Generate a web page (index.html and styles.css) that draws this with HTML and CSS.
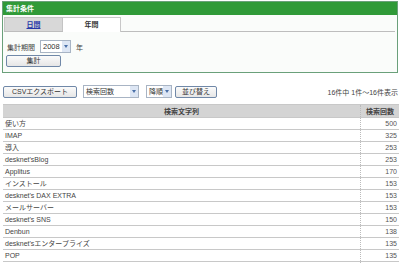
FILE: index.html
```html
<!DOCTYPE html>
<html lang="ja">
<head>
    <meta charset="UTF-8">
    <title>検索キーワード集計</title>
    <link rel="stylesheet" href="styles.css">
</head>
<body>
    <div class="panel">
        <div class="panel-head">集計条件</div>
        <div class="tabs">
            <div class="tab off"><a href="#">日間</a></div>
            <div class="tab on">年間</div>
        </div>
        <div class="period">
            <span class="label">集計期間</span>
            <span class="select year"><span class="val">2008</span><span class="arrow"></span></span>
            <span class="unit">年</span>
        </div>
        <button class="btn sum">集計</button>
    </div>

    <div class="toolbar">
        <button class="btn csv">CSVエクスポート</button>
        <span class="select sort-key"><span class="val">検索回数</span><span class="arrow"></span></span>
        <span class="select sort-dir"><span class="val">降順</span><span class="arrow"></span></span>
        <button class="btn sort">並び替え</button>
        <span class="count">16件中 1件～16件表示</span>
    </div>

    <table class="result">
        <thead>
            <tr><th>検索文字列</th><th class="num-col">検索回数</th></tr>
        </thead>
        <tbody>
            <tr><td>使い方</td><td class="num">500</td></tr>
            <tr><td>IMAP</td><td class="num">325</td></tr>
            <tr><td>導入</td><td class="num">253</td></tr>
            <tr><td>desknet'sBlog</td><td class="num">253</td></tr>
            <tr><td>Applitus</td><td class="num">170</td></tr>
            <tr><td>インストール</td><td class="num">153</td></tr>
            <tr><td>desknet's DAX EXTRA</td><td class="num">153</td></tr>
            <tr><td>メールサーバー</td><td class="num">153</td></tr>
            <tr><td>desknet's SNS</td><td class="num">150</td></tr>
            <tr><td>Denbun</td><td class="num">138</td></tr>
            <tr><td>desknet'sエンタープライズ</td><td class="num">135</td></tr>
            <tr><td>POP</td><td class="num">135</td></tr>
            <tr><td>&nbsp;</td><td class="num">&nbsp;</td></tr>
        </tbody>
    </table>
</body>
</html>
```

FILE: styles.css
```css
body {
    margin: 0;
    background-color: #fff;
    font-family: "Liberation Sans", "Noto Sans CJK JP", sans-serif;
    font-size: 7px;
    color: #444;
    overflow: hidden;
}
.panel {
    margin: 1px 2px 0 2px;
    height: 70px;
    border: 1px solid #6aa07a;
    background-color: #fafcfa;
}
.panel-head {
    height: 13px;
    line-height: 13px;
    padding-left: 3px;
    background-color: #309a38;
    color: #fff;
    font-weight: bold;
}
.tabs {
    display: flex;
    margin: 2px 2px 0 1px;
    height: 14px;
    border-bottom: 1px solid #bdbdbd;
}
.tab {
    width: 57px;
    height: 13px;
    line-height: 13px;
    text-align: center;
    font-weight: bold;
}
.tab.off {
    background-color: #d8d8d8;
    border: 1px solid #c4c4c4;
    border-bottom: none;
}
.tab.off a {
    color: #2838a8;
}
.tab.on {
    height: 14px;
    background-color: #fff;
    border: 1px solid #c8c8c8;
    border-bottom: none;
    border-left: none;
    color: #333;
}
.period {
    display: flex;
    align-items: center;
    margin: 8px 0 0 4px;
    height: 13px;
}
.label {
    margin-right: 5px;
}
.unit {
    margin-left: 5px;
}
.select {
    display: inline-flex;
    align-items: stretch;
    height: 11px;
    border: 1px solid #a8b4c4;
    background-color: #fff;
    white-space: nowrap;
}
.select .val {
    flex: 1;
    padding-left: 2px;
    line-height: 11px;
    color: #333;
    overflow: hidden;
}
.select .arrow {
    flex: none;
    width: 8px;
    background-color: #dde6f4;
    position: relative;
}
.select .arrow::after {
    content: "";
    position: absolute;
    left: 2px;
    top: 4px;
    width: 0;
    height: 0;
    border-left: 2px solid transparent;
    border-right: 2px solid transparent;
    border-top: 3px solid #4a6fa8;
}
.select.year {
    width: 29px;
}
.select.year .val {
    font-size: 7.5px;
}
.btn {
    font-family: inherit;
    font-size: 7px;
    height: 12px;
    padding: 0;
    border: 1px solid #7088a8;
    border-radius: 2px;
    background: linear-gradient(#fbfbfb, #e6e6e6);
    color: #333;
    line-height: 10px;
    white-space: nowrap;
}
.btn.sum {
    display: block;
    margin: 2px 0 0 3px;
    width: 55px;
}
.toolbar {
    display: flex;
    align-items: center;
    margin: 12px 2px 0 3px;
    height: 13px;
}
.btn.csv {
    width: 74px;
}
.select.sort-key {
    margin-left: 6px;
    width: 54px;
}
.select.sort-dir {
    margin-left: 7px;
    width: 24px;
}
.btn.sort {
    margin-left: 3px;
    width: 42px;
}
.count {
    margin-left: auto;
}
.result {
    margin: 6px 1px 0 3px;
    width: 396px;
    border-collapse: collapse;
    table-layout: fixed;
}
.result th, .result td {
    height: 11px;
    padding: 0 2px;
    line-height: 11px;
    border-bottom: 1px solid #c8c8c8;
    border-top: 1px solid #c8c8c8;
    text-align: left;
    font-weight: normal;
    white-space: nowrap;
}
.result th {
    height: 12px;
    background-color: #d4d4d4;
    text-align: center;
    font-weight: bold;
    color: #444;
}
.result .num-col {
    width: 34px;
    border-left: 1px dotted #bbb;
}
.result td.num {
    text-align: right;
    border-left: 1px dotted #bbb;
    color: #555;
}
```
